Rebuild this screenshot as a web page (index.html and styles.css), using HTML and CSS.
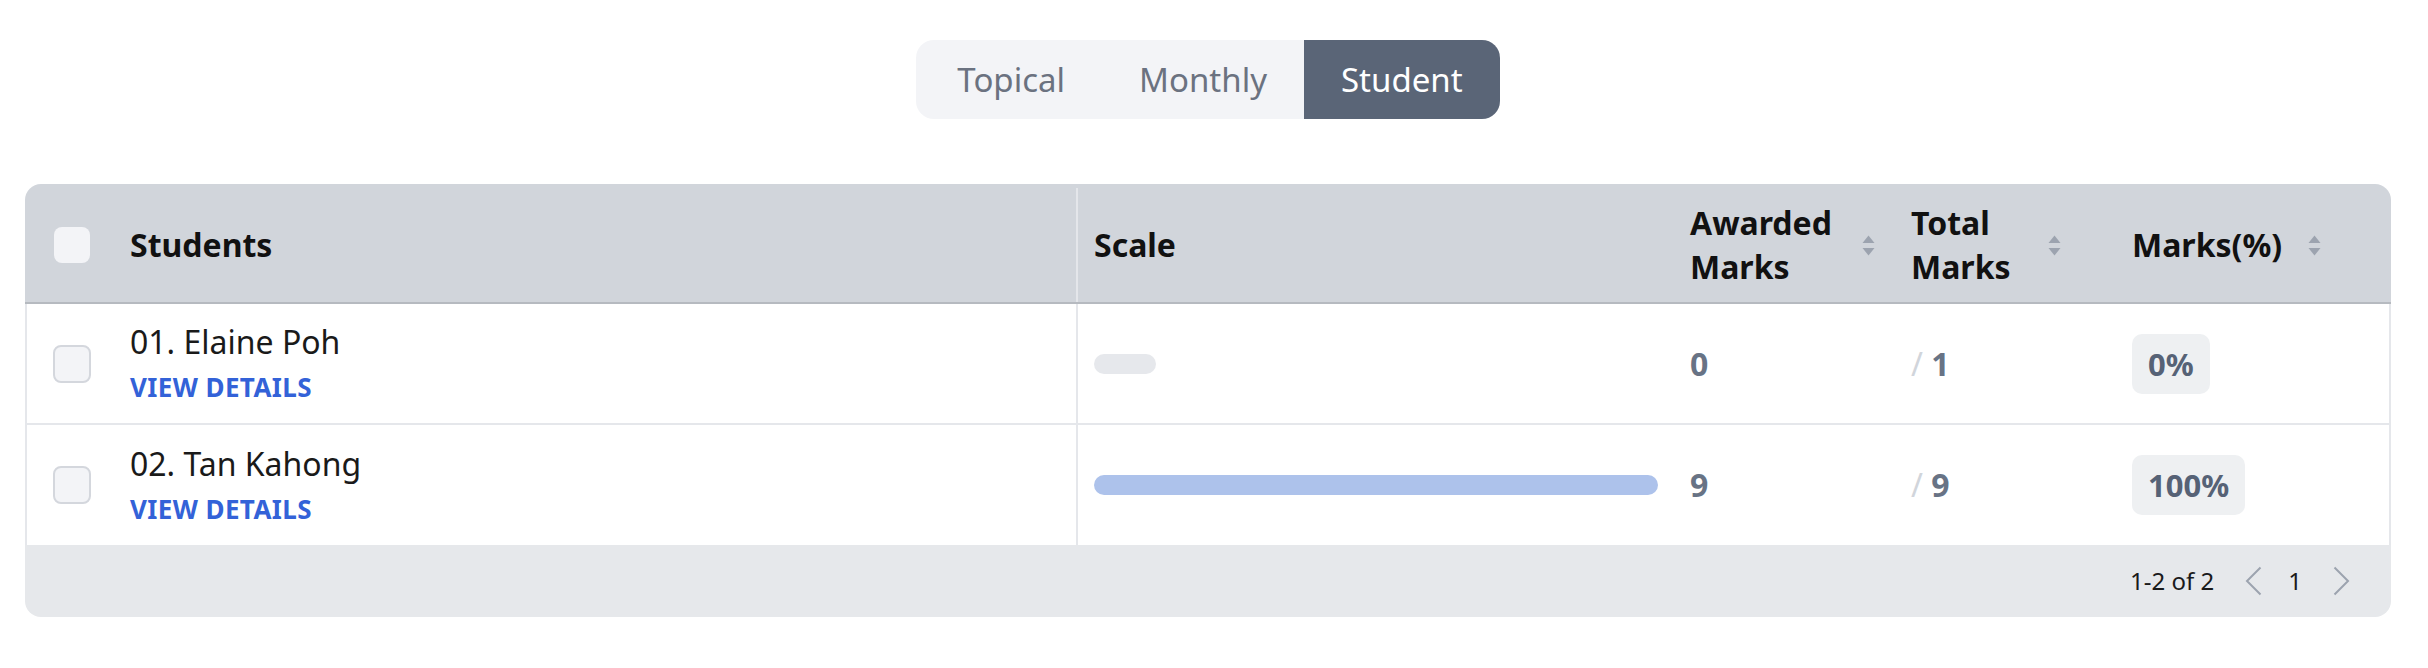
FILE: index.html
```html
<!DOCTYPE html>
<html lang="en">
<head>
<meta charset="utf-8">
<title>Student Marks</title>
<link rel="stylesheet" href="styles.css">
</head>
<body>
<div class="page">
  <div class="tabs">
    <button class="tab">Topical</button>
    <button class="tab">Monthly</button>
    <button class="tab tab-active">Student</button>
  </div>

  <div class="table">
    <div class="row row-head">
      <div class="cell cell-student">
        <span class="cb-slot"><span class="cb cb-head"></span></span>
        <span class="th-text">Students</span>
      </div>
      <div class="cell"><span class="th-text">Scale</span></div>
      <div class="cell">
        <span class="th-text th-awarded">Awarded Marks</span>
        <svg class="sorter" width="13" height="21" viewBox="0 0 13 21"><path d="M6.5 0.5 L12.5 8 H0.5 Z" fill="#9ca3af"/><path d="M0.5 13 H12.5 L6.5 20.5 Z" fill="#9ca3af"/></svg>
      </div>
      <div class="cell">
        <span class="th-text th-total">Total Marks</span>
        <svg class="sorter" width="13" height="21" viewBox="0 0 13 21"><path d="M6.5 0.5 L12.5 8 H0.5 Z" fill="#9ca3af"/><path d="M0.5 13 H12.5 L6.5 20.5 Z" fill="#9ca3af"/></svg>
      </div>
      <div class="cell">
        <span class="th-text th-pct">Marks(%)</span>
        <svg class="sorter" width="13" height="21" viewBox="0 0 13 21"><path d="M6.5 0.5 L12.5 8 H0.5 Z" fill="#9ca3af"/><path d="M0.5 13 H12.5 L6.5 20.5 Z" fill="#9ca3af"/></svg>
      </div>
    </div>

    <div class="row row-body">
      <div class="cell cell-student">
        <span class="cb-slot"><span class="cb"></span></span>
        <div class="student">
          <span class="name">01. Elaine Poh</span>
          <a class="details" href="#">VIEW DETAILS</a>
        </div>
      </div>
      <div class="cell"><div class="bar bar-empty" style="width:0%"></div></div>
      <div class="cell"><span class="num">0</span></div>
      <div class="cell"><span class="num"><span class="slash">/</span> 1</span></div>
      <div class="cell"><span class="badge">0%</span></div>
    </div>

    <div class="row row-body">
      <div class="cell cell-student">
        <span class="cb-slot"><span class="cb"></span></span>
        <div class="student">
          <span class="name">02. Tan Kahong</span>
          <a class="details" href="#">VIEW DETAILS</a>
        </div>
      </div>
      <div class="cell"><div class="bar bar-fill" style="width:100%"></div></div>
      <div class="cell"><span class="num">9</span></div>
      <div class="cell"><span class="num"><span class="slash">/</span> 9</span></div>
      <div class="cell"><span class="badge">100%</span></div>
    </div>

    <div class="foot">
      <span class="range">1-2 of 2</span>
      <svg class="chev chev-prev" width="17" height="30" viewBox="0 0 17 30"><polyline points="15.5,1.5 2,15 15.5,28.5" fill="none" stroke="#9ca3af" stroke-width="2"/></svg>
      <span class="page-num">1</span>
      <svg class="chev chev-next" width="17" height="30" viewBox="0 0 17 30"><polyline points="1.5,1.5 15,15 1.5,28.5" fill="none" stroke="#9ca3af" stroke-width="2"/></svg>
    </div>
  </div>
</div>
</body>
</html>
```

FILE: styles.css
```css
* { box-sizing: border-box; }

body {
  margin: 0;
  background: #ffffff;
  font-family: "Noto Sans", "Open Sans", sans-serif;
  color: #111827;
}

.page {
  padding: 40px 37px 0 25px;
}

/* segmented control */
.tabs {
  display: flex;
  width: max-content;
  margin: 0 auto;
  padding-left: 4px;
  background: #f3f4f7;
  border-radius: 18px;
  overflow: hidden;
}

.tab {
  font-family: inherit;
  font-size: 33px;
  line-height: 79px;
  height: 79px;
  padding: 0 37px;
  border: 0;
  background: transparent;
  color: #6b7280;
}

.tab-active {
  background: #5a6577;
  color: #ffffff;
}

/* table */
.table {
  margin-top: 65px;
  border-radius: 16px;
  overflow: hidden;
}

.row {
  display: grid;
  grid-template-columns: 1051px 596px 221px 221px 1fr;
}

.cell {
  display: flex;
  align-items: center;
  padding: 0 16px;
  min-width: 0;
}

.cell-student {
  padding-left: 25px;
  border-right: 2px solid #e5e7eb;
}

.row-head {
  height: 120px;
  padding: 4px 2px 0;
  background: #d1d5db;
  border-bottom: 2px solid #b6bac0;
}

.row-head .cell-student {
  border-right-color: #e4e6ea;
}

.th-text {
  font-size: 32px;
  line-height: 44px;
  font-weight: 700;
  color: #111111;
}

.th-awarded { flex: 0 0 172px; }
.th-total { flex: 0 0 137px; }
.th-pct { flex: 0 0 176px; }

.sorter { flex: 0 0 auto; }

.cb-slot {
  display: flex;
  align-items: center;
  justify-content: center;
  width: 40px;
  margin-right: 38px;
}

.cb {
  display: block;
  width: 38px;
  height: 38px;
  border: 2px solid #d4d7dd;
  border-radius: 8px;
  background: #f3f4f7;
}

.cb-head {
  width: 36px;
  height: 36px;
  border: 0;
  border-radius: 8px;
}

.row-body {
  height: 119px;
  background: #ffffff;
  border-left: 2px solid #e5e7eb;
  border-right: 2px solid #e5e7eb;
}

.row-body + .row-body {
  height: 122px;
  border-top: 2px solid #e5e7eb;
}

.student {
  display: flex;
  flex-direction: column;
}

.name {
  font-size: 32px;
  line-height: 48px;
  color: #1a1a1a;
}

.details {
  font-size: 26px;
  line-height: 43px;
  font-weight: 700;
  letter-spacing: 0.4px;
  color: #3362d8;
  text-decoration: none;
}

.bar {
  height: 20px;
  border-radius: 10px;
}

.bar-empty {
  min-width: 62px;
  background: #e6e8ec;
}

.bar-fill {
  background: #adc2eb;
}

.num {
  font-size: 32px;
  line-height: 48px;
  font-weight: 700;
  color: #687385;
}

.slash {
  font-weight: 400;
  color: #d1d5db;
}

.badge {
  display: inline-block;
  padding: 6px 16px;
  border-radius: 10px;
  background: #eef0f2;
  font-size: 31px;
  line-height: 48px;
  font-weight: 700;
  color: #566276;
}

/* footer */
.foot {
  display: flex;
  align-items: center;
  justify-content: flex-end;
  height: 72px;
  padding-right: 41px;
  background: #e6e8eb;
}

.range {
  font-size: 24px;
  line-height: 32px;
  color: #1a1a1a;
}

.chev-prev { margin-left: 31px; }

.page-num {
  margin-left: 26px;
  font-size: 24px;
  line-height: 32px;
  color: #1a1a1a;
}

.chev-next { margin-left: 31px; }
```
